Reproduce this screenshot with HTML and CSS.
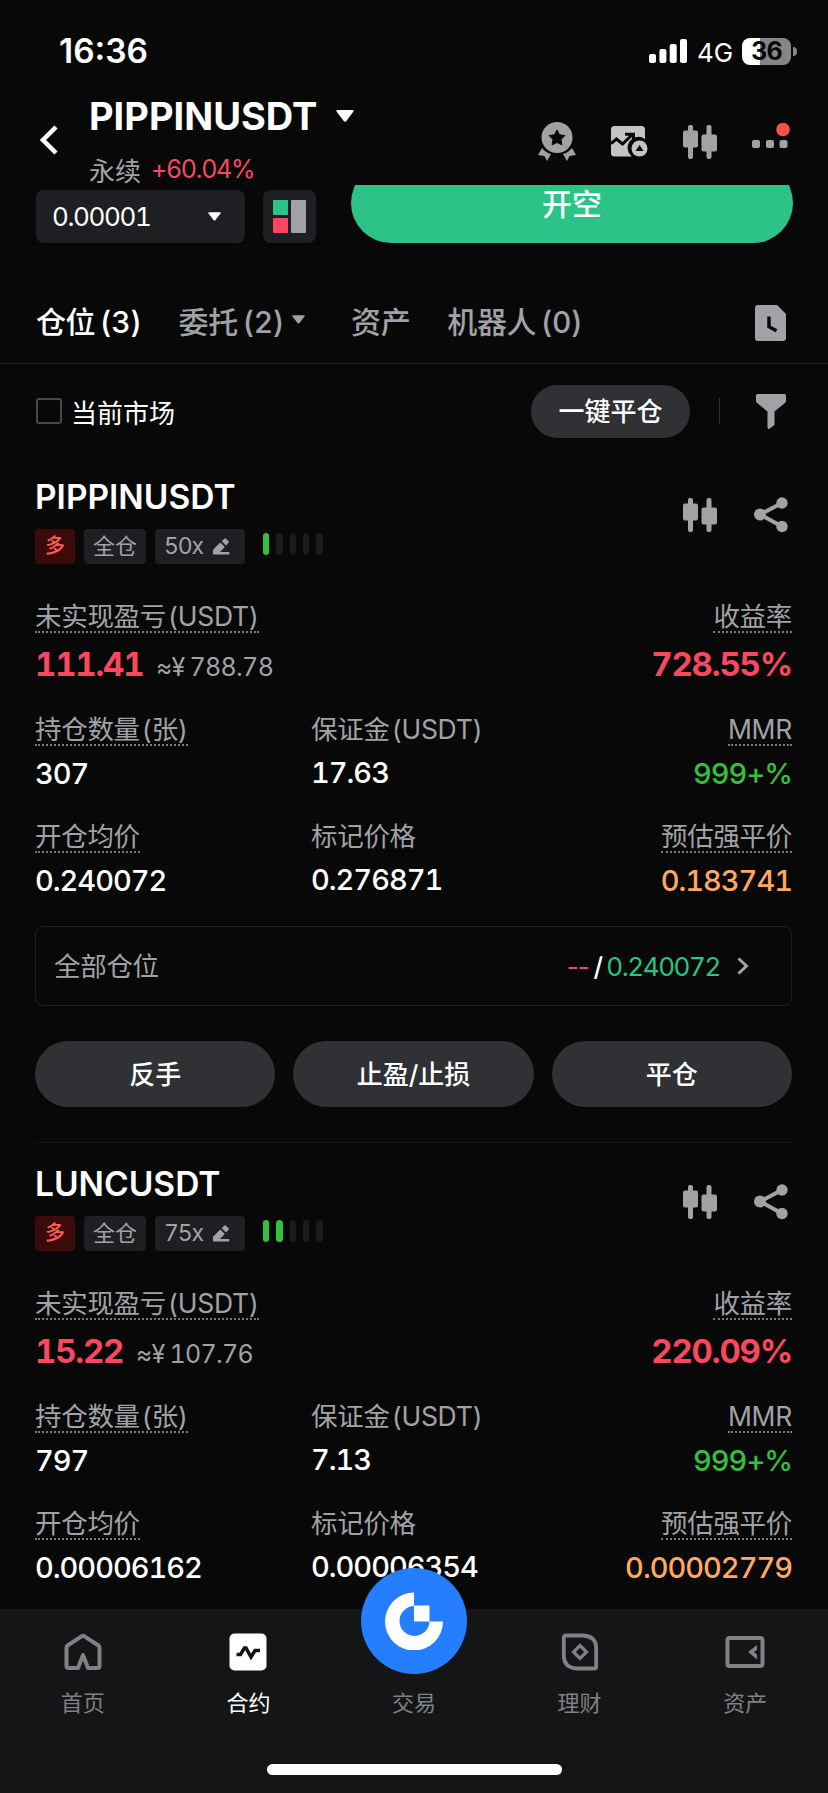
FILE: index.html
```html
<!DOCTYPE html>
<html lang="zh">
<head>
    <meta charset="UTF-8">
    <meta name="viewport" content="width=device-width, initial-scale=1.0">
    <title>PIPPINUSDT 永续</title>
    <link rel="stylesheet" href="styles.css">
</head>
<body>
    <svg class="symbols" width="0" height="0">
        <symbol id="candles" viewBox="0 0 34 34">
            <rect x="5" y="0" width="5" height="34" rx="2"/>
            <rect x="0" y="5.500" width="15" height="17" rx="2"/>
            <rect x="23.500" y="0" width="5" height="34" rx="2"/>
            <rect x="18.500" y="9.500" width="15.500" height="17" rx="2"/>
        </symbol>
        <symbol id="share" viewBox="0 0 34 36">
            <path d="M28 6L6 17.500l22 12" fill="none" stroke="currentColor" stroke-width="4"/>
            <circle cx="28" cy="6" r="5.700"/>
            <circle cx="6" cy="17.500" r="6"/>
            <circle cx="28" cy="29.500" r="5.700"/>
        </symbol>
        <symbol id="edit" viewBox="0 0 17 17">
            <path d="M0 16v-4.200L7.300 4.500l4.500 4.500L7 14h9.200v2.400H.500zM8.700 3.200L11.200.700q.900-.900 1.800 0l2.400 2.400q.900.900 0 1.800l-2.300 2.500z"/>
        </symbol>
        <symbol id="caret" viewBox="0 0 18 12">
            <path d="M1.500 0h15q1.800.200.800 1.700l-7 9.300q-1.300 1.400-2.600 0L.700 1.700Q-.300.200 1.500 0z"/>
        </symbol>
    </svg>

    <div class="status-bar">
        <span class="time">16:36</span>
        <svg class="signal" width="38" height="24" viewBox="0 0 38 24">
            <rect x="0" y="15" width="7" height="9" rx="2"/>
            <rect x="10.400" y="10" width="7" height="14" rx="2"/>
            <rect x="20.700" y="5" width="7" height="19" rx="2"/>
            <rect x="31" y="0" width="7" height="24" rx="2"/>
        </svg>
        <span class="network">4G</span>
        <span class="battery">36</span>
        <span class="battery-cap"></span>
    </div>

    <div class="header">
        <svg class="back" width="18" height="30" viewBox="0 0 18 30">
            <path d="M16 2L3 15l13 13" fill="none" stroke="#fff" stroke-width="4.500"/>
        </svg>
        <div class="pair">
            <div class="pair-name">PIPPINUSDT <svg width="18" height="12"><use href="#caret"/></svg></div>
            <div class="pair-info">永续 <span class="change">+60.04%</span></div>
        </div>
        <div class="header-icons">
            <svg width="38" height="40" viewBox="0 0 38 40">
                <circle cx="19" cy="15.500" r="15.500"/>
                <path d="M19 8l2.500 4.800 5.300.800-3.800 3.900.900 5.400-4.900-2.500-4.900 2.500.9-5.400-3.800-3.900 5.300-.800z" fill="#080808" stroke="#080808" stroke-linejoin="round"/>
                <path d="M4 26q4 5 9 6l-4 7-2.500-5L0 33zM34 26q-4 5-9 6l4 7 2.500-5L38 33z"/>
            </svg>
            <svg class="light" width="37" height="31" viewBox="0 0 37 31">
                <path d="M3.500 0h27q3.500 0 3.500 3.500V13a10 10 0 0 0-13 17.500H3.500Q0 30.500 0 27V3.500Q0 0 3.500 0z"/>
                <path d="M0 17.500l5.500-4.500 6 5L22 8m-8 .300h8.500V14" fill="none" stroke="#080808" stroke-width="3"/>
                <circle cx="28.500" cy="22.500" r="10.500" fill="#080808"/>
                <circle cx="28.500" cy="22.500" r="8"/>
                <path d="M28.500 19l4 6h-8z" fill="#080808"/>
            </svg>
            <svg width="34" height="34"><use href="#candles"/></svg>
            <svg class="more" width="38" height="34" viewBox="0 0 38 34">
                <rect x="0" y="15" width="8" height="8" rx="2"/>
                <rect x="14" y="15" width="8" height="8" rx="2"/>
                <rect x="27.500" y="15" width="8" height="8" rx="2"/>
                <circle cx="31" cy="4.500" r="6.800" fill="#ff5044"/>
            </svg>
        </div>
    </div>

    <div class="main">
        <div class="order-row">
            <div class="precision">0.00001 <svg width="13" height="9"><use href="#caret"/></svg></div>
            <div class="depth">
                <svg width="33" height="33" viewBox="0 0 33 33">
                    <rect x="0" y="0" width="15" height="15" rx="1" fill="#2cc388"/>
                    <rect x="0" y="18" width="15" height="15" rx="1" fill="#f8475f"/>
                    <rect x="18" y="0" width="15" height="33" rx="1"/>
                </svg>
            </div>
            <div class="short-button">开空</div>
        </div>

        <div class="tabs">
            <span class="active">仓位 (3)</span>
            <span>委托 (2)<svg width="13" height="9"><use href="#caret"/></svg></span>
            <span>资产</span>
            <span>机器人 (0)</span>
            <svg class="history" width="31" height="36" viewBox="0 0 31 36">
                <path d="M3 0h19l9 9v24q0 3-3 3H3q-3 0-3-3V3q0-3 3-3z"/>
                <path d="M14 11.500v10.200l7.500 4" fill="none" stroke="#080808" stroke-width="3.500"/>
            </svg>
        </div>

        <div class="filter-row">
            <span class="checkbox"></span>
            <span class="current">当前市场</span>
            <span class="close-all">一键平仓</span>
            <span class="line"></span>
            <svg width="30" height="35" viewBox="0 0 30 35">
                <path d="M1.500 0h27Q30 0 30 1.500V7q0 1-.800 1.700L18.500 17.500V31l-5.500 4q-1.500 0-1.500-1.500v-16L.800 8.700Q0 8 0 7V1.500Q0 0 1.500 0z"/>
            </svg>
        </div>

        <div class="position">
            <div class="position-head">
                <div>
                    <h2>PIPPINUSDT</h2>
                    <div class="tags">
                        <span class="tag long">多</span>
                        <span class="tag">全仓</span>
                        <span class="tag lever">50x <svg width="17" height="17"><use href="#edit"/></svg></span>
                        <span class="risk"><i class="on"></i><i></i><i></i><i></i><i></i></span>
                    </div>
                </div>
                <div class="position-icons">
                    <svg width="34" height="34"><use href="#candles"/></svg>
                    <svg width="34" height="36"><use href="#share"/></svg>
                </div>
            </div>
            <div class="row profit">
                <div><span class="label tip">未实现盈亏 (USDT)</span><div class="value red">111.41 <small>≈¥ 788.78</small></div></div>
                <div><span class="label tip">收益率</span><div class="value red">728.55%</div></div>
            </div>
            <div class="row">
                <div><span class="label tip">持仓数量 (张)</span><div class="value">307</div></div>
                <div><span class="label">保证金 (USDT)</span><div class="value">17.63</div></div>
                <div><span class="label tip">MMR</span><div class="value green">999+%</div></div>
            </div>
            <div class="row">
                <div><span class="label tip">开仓均价</span><div class="value">0.240072</div></div>
                <div><span class="label">标记价格</span><div class="value">0.276871</div></div>
                <div><span class="label tip">预估强平价</span><div class="value orange">0.183741</div></div>
            </div>
            <div class="all-positions">
                <span class="label">全部仓位</span>
                <span class="limits"><span class="red dash">--</span> <b>/</b> <span class="teal">0.240072</span></span>
                <svg width="12" height="18" viewBox="0 0 12 18"><path d="M1.500 1.500L9.500 9l-8 7.500" fill="none" stroke="#a1a2a5" stroke-width="3"/></svg>
            </div>
            <div class="actions">
                <span>反手</span>
                <span>止盈/止损</span>
                <span>平仓</span>
            </div>
        </div>

        <div class="position">
            <div class="position-head">
                <div>
                    <h2>LUNCUSDT</h2>
                    <div class="tags">
                        <span class="tag long">多</span>
                        <span class="tag">全仓</span>
                        <span class="tag lever">75x <svg width="17" height="17"><use href="#edit"/></svg></span>
                        <span class="risk"><i class="on"></i><i class="on"></i><i></i><i></i><i></i></span>
                    </div>
                </div>
                <div class="position-icons">
                    <svg width="34" height="34"><use href="#candles"/></svg>
                    <svg width="34" height="36"><use href="#share"/></svg>
                </div>
            </div>
            <div class="row profit">
                <div><span class="label tip">未实现盈亏 (USDT)</span><div class="value red">15.22 <small>≈¥ 107.76</small></div></div>
                <div><span class="label tip">收益率</span><div class="value red">220.09%</div></div>
            </div>
            <div class="row">
                <div><span class="label tip">持仓数量 (张)</span><div class="value">797</div></div>
                <div><span class="label">保证金 (USDT)</span><div class="value">7.13</div></div>
                <div><span class="label tip">MMR</span><div class="value green">999+%</div></div>
            </div>
            <div class="row">
                <div><span class="label tip">开仓均价</span><div class="value">0.00006162</div></div>
                <div><span class="label">标记价格</span><div class="value">0.00006354</div></div>
                <div><span class="label tip">预估强平价</span><div class="value orange">0.00002779</div></div>
            </div>
        </div>
    </div>

    <div class="bottom-bar">
        <div class="nav">
            <a>
                <svg width="38" height="38" viewBox="0 0 38 38"><path d="M4.500 35q-2 0-2-2V14.500q0-1.200 1-2L17.500 3.300q1.500-.900 3 0l14 9.200q1 .800 1 2V33q0 2-2 2H24L19 22 14 35z" fill="none" stroke="#808184" stroke-width="4" stroke-linejoin="round"/></svg>
                首页
            </a>
            <a class="active">
                <svg width="38" height="38" viewBox="0 0 38 38"><rect x=".500" y=".500" width="37" height="37" rx="5" fill="#fff"/><path d="M7.500 21.500h4l4-6.500h1.500l5 9 4-6.500H31" fill="none" stroke="#121416" stroke-width="3.500"/></svg>
                合约
            </a>
            <a>
                <span class="spacer"></span>
                交易
            </a>
            <a>
                <svg width="38" height="38" viewBox="0 0 38 38"><path d="M5 2.500h17.500Q35 3.500 35.200 15v18.500q0 2-2 2H15.500Q3 34.500 2.800 23V4.500q0-2 2.200-2z" fill="none" stroke="#808184" stroke-width="3.800"/><path d="M19 12.500l6.500 6.500-6.500 6.500-6.500-6.500z" fill="none" stroke="#808184" stroke-width="3.200"/></svg>
                理财
            </a>
            <a>
                <svg width="40" height="38" viewBox="0 0 40 38"><rect x="2.500" y="5" width="35" height="28" rx="2" fill="none" stroke="#808184" stroke-width="4"/><path d="M32 12v5l-3 2 3 2.500v5l-9-7.500z" fill="#808184"/></svg>
                资产
            </a>
        </div>
        <div class="trade">
            <svg width="58" height="58" viewBox="0 0 58 58">
                <path d="M29 0.500v13.500A15 15 0 1 0 44.500 29.500H58A29 29 0 1 1 29 .500z" fill="#fff"/>
                <path d="M29 13.500h15.500v16H29z" fill="#fff"/>
            </svg>
        </div>
        <div class="home-line"></div>
    </div>
</body>
</html>
```
FILE: styles.css
```css
body {
    font-family: Inter, "Noto Sans CJK SC", sans-serif;
    margin: 0;
    width: 828px;
    height: 1793px;
    overflow: hidden;
    background-color: #080808;
    color: #fff;
    font-size: 26px;
    display: flex;
    flex-direction: column;
    font-variant-numeric: tabular-nums;
}

svg {
    display: block;
    flex-shrink: 0;
    fill: #a1a2a5;
    color: #a1a2a5;
}

.symbols {
    position: absolute;
}

.status-bar {
    height: 102px;
    box-sizing: border-box;
    padding: 0 31px 0 59px;
    display: flex;
    align-items: center;
    flex-shrink: 0;
}

.time {
    font-size: 33.5px;
    font-weight: 600;
    font-variant-numeric: normal;
    margin-right: auto;
}

.signal {
    fill: #fff;
}

.network {
    margin: 2px 9px 0 10px;
    width: 36px;
}

.battery {
    width: 49px;
    height: 27px;
    line-height: 27px;
    border-radius: 8px;
    background: linear-gradient(to right, #fff 36%, #858585 36%);
    color: #080808;
    font-size: 25px;
    font-weight: 700;
    letter-spacing: -1px;
    text-align: center;
}

.battery-cap {
    width: 4px;
    height: 9px;
    margin-left: 2px;
    border-radius: 0 4px 4px 0;
    background-color: #858585;
}

.header {
    height: 83px;
    box-sizing: border-box;
    padding: 0 38px 0 40px;
    display: flex;
    flex-shrink: 0;
}

.back {
    margin: 23px 31px 0 0;
}

.pair {
    flex: 1;
    margin-top: -8px;
}

.pair-name {
    display: flex;
    align-items: center;
    gap: 19px;
    height: 44px;
    font-size: 38px;
    font-weight: 700;
}

.pair-name svg,
.precision svg {
    fill: #fff;
}

.pair-info {
    display: flex;
    align-items: center;
    gap: 10px;
    height: 36px;
    margin-top: 13px;
    color: #a1a2a5;
}

.change {
    color: #f8475f;
    font-size: 25px;
    letter-spacing: -1.3px;
}

.header-icons {
    display: flex;
    align-items: center;
    gap: 35px;
    height: 79px;
}

.light {
    fill: #c4c4c6;
}

.more {
    overflow: visible;
}

.main {
    flex: 1;
    min-height: 0;
    overflow: hidden;
}

.order-row {
    display: flex;
    align-items: flex-end;
    padding: 0 35px 0 36px;
    height: 58px;
}

.precision {
    display: flex;
    align-items: center;
    justify-content: space-between;
    box-sizing: border-box;
    width: 209px;
    height: 53px;
    padding: 0 24px 0 16px;
    border-radius: 8px;
    background-color: #1e1f22;
    letter-spacing: -1.4px;
}

.depth {
    display: flex;
    align-items: center;
    justify-content: center;
    width: 53px;
    height: 53px;
    margin: 0 35px 0 18px;
    border-radius: 8px;
    background-color: #1e1f22;
}

.short-button {
    flex: 1;
    height: 80px;
    line-height: 82px;
    border-radius: 40px;
    background-color: #2cc388;
    font-size: 30px;
    font-weight: 500;
    text-align: center;
}

.tabs {
    display: flex;
    align-items: center;
    height: 121px;
    box-sizing: border-box;
    padding: 40px 42px 0 36px;
    border-bottom: 1px solid #242527;
    color: #a1a2a5;
    font-size: 30px;
    font-weight: 500;
    letter-spacing: -0.4px;
    word-spacing: -3px;
}

.tabs span {
    display: flex;
    align-items: center;
    gap: 8px;
    margin: -7px 37px 0 0;
}

.tabs span svg {
    margin-right: 9px;
}

.tabs .active {
    color: #fff;
}

.history {
    margin-left: auto;
}

.filter-row {
    display: flex;
    align-items: center;
    height: 94px;
    padding: 0 42px 4px 36px;
}

.checkbox {
    width: 22px;
    height: 22px;
    border: 2px solid #48494c;
    border-radius: 3px;
}

.current {
    margin: 0 auto 0 9px;
}

.close-all {
    width: 159px;
    height: 53px;
    line-height: 54px;
    border-radius: 27px;
    background-color: #303134;
    font-weight: 500;
    text-align: center;
}

.line {
    width: 1px;
    height: 26px;
    margin: 0 36px 0 29px;
    background-color: #303134;
}

.position {
    box-sizing: border-box;
    height: 681px;
    margin: 0 36px 6px 35px;
    padding-top: 18px;
    border-bottom: 1px solid #17181a;
}

.position-head {
    display: flex;
    justify-content: space-between;
}

.position h2 {
    margin: 0;
    font-size: 33.5px;
    font-weight: 600;
    line-height: 35px;
}

.tags {
    display: flex;
    align-items: center;
    gap: 9px;
    height: 35px;
    margin-top: 14px;
}

.tag {
    box-sizing: border-box;
    height: 35px;
    line-height: 35px;
    padding: 0 9px;
    border-radius: 4px;
    background-color: #1e1f22;
    color: #a1a2a5;
    font-size: 22px;
}

.long {
    width: 40px;
    background-color: #3a0b09;
    color: #ff5f55;
    font-size: 20px;
    font-weight: 500;
    text-align: center;
}

.lever {
    display: flex;
    align-items: center;
    justify-content: space-between;
    width: 90px;
    padding-right: 15px;
    letter-spacing: -1.2px;
    font-size: 23px;
}

.risk {
    display: flex;
    gap: 7px;
    height: 22px;
    margin: -5px 0 0 9px;
}

.risk i {
    width: 6.300px;
    border-radius: 4px;
    background-color: #1a1b1d;
}

.risk .on {
    background-color: #34c13c;
}

.position-icons {
    display: flex;
    align-items: center;
    gap: 37px;
    margin-right: 4px;
    height: 70px;
}

.row {
    display: grid;
    grid-template-columns: 276px 1fr auto;
    height: 85px;
    margin-top: 22px;
}

.row > div:last-child {
    text-align: right;
}

.profit {
    grid-template-columns: 1fr auto;
    height: 91px;
    margin-top: 37px;
}

.label {
    display: inline-block;
    height: 30px;
    line-height: 30px;
    color: #a1a2a5;
    font-size: 26.5px;
    letter-spacing: -0.3px;
    word-spacing: -5px;
    vertical-align: top;
}

.tip {
    border-bottom: 2px dotted #77787b;
}

.value {
    height: 34px;
    line-height: 34px;
    font-size: 29px;
    font-weight: 500;
    letter-spacing: -1px;
}

.label + .value {
    margin-top: 11px;
}

.label:not(.tip) + .value {
    margin-top: 11px;
}

.profit .label + .value {
    margin-top: 14px;
    font-size: 33px;
    font-weight: 700;
    letter-spacing: -1.2px;
}

.value small {
    margin-left: 5px;
    color: #a1a2a5;
    font-size: 25px;
    font-weight: 400;
    letter-spacing: -0.7px;
    word-spacing: -1px;
}

.red {
    color: #f8475f;
}

.green {
    color: #34c13c;
}

.orange {
    color: #ffa960;
}

.teal {
    color: #2cc388;
}

.all-positions {
    display: flex;
    align-items: center;
    justify-content: space-between;
    box-sizing: border-box;
    height: 80px;
    margin-top: 20px;
    padding: 0 42px 0 18px;
    border: 1px solid #1e1f21;
    border-radius: 8px;
}

.limits {
    margin: 0 17px 0 auto;
    letter-spacing: -1.4px;
    word-spacing: -1px;
}

.dash {
    font-variant-numeric: normal;
    letter-spacing: -1px;
}

.limits b {
    font-weight: 500;
}

.actions {
    display: grid;
    grid-template-columns: repeat(3, 1fr);
    gap: 18px;
    margin-top: 35px;
}

.actions span {
    height: 66px;
    line-height: 67px;
    border-radius: 33px;
    background-color: #303134;
    font-weight: 500;
    text-align: center;
}

.bottom-bar {
    position: relative;
    height: 184px;
    flex-shrink: 0;
    background-color: #141517;
}

.nav {
    display: grid;
    grid-template-columns: repeat(5, 1fr);
    height: 155px;
}

.nav a {
    display: flex;
    flex-direction: column;
    align-items: center;
    gap: 16px;
    padding-top: 24px;
    color: #808184;
    font-size: 22px;
    line-height: 32px;
}

.nav .active {
    color: #fff;
}

.spacer {
    height: 38px;
}

.trade {
    position: absolute;
    left: 361px;
    top: -41px;
    width: 106px;
    height: 106px;
    border-radius: 50%;
    background-color: #257dff;
    display: flex;
    align-items: center;
    justify-content: center;
}

.home-line {
    width: 295px;
    height: 11px;
    margin: 0 auto;
    border-radius: 6px;
    background-color: #fff;
}
```
